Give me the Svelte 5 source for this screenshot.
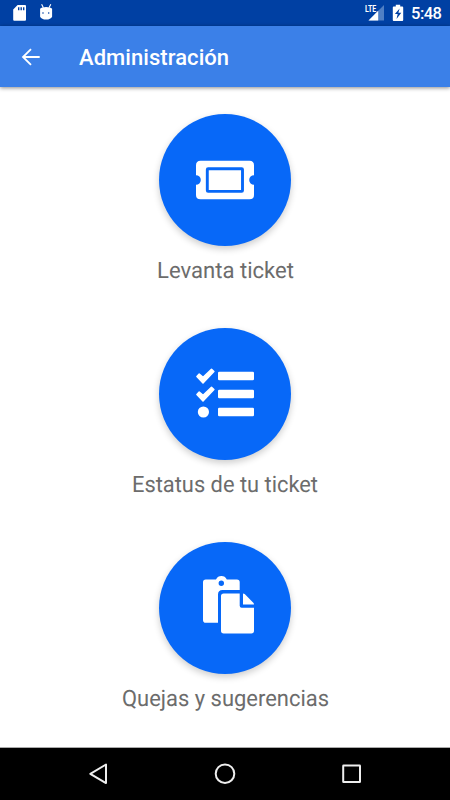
<script>
  const items = [
    { icon: 'ticket', label: 'Levanta ticket', width: 137 },
    { icon: 'tasks', label: 'Estatus de tu ticket', width: 186 },
    { icon: 'paste', label: 'Quejas y sugerencias', width: 207 }
  ];
</script>

<div class="screen">
  <div class="status">
    <svg width="90" height="26" viewBox="0 0 90 26" fill="#fff">
      <path fill-rule="evenodd" d="M17.6 5H25q1 0 1 1v13.7q0 1-1 1H14.2q-1 0-1-1V9.6ZM18 7.2v3h1.4v-3Zm2.5 0v3h1.4v-3Zm2.5 0v3h1.4v-3Z" />
      <path d="m41.6 4.2 1.8 3.6M50.8 4.2 49 7.8" stroke="#fff" stroke-width="1.1" />
      <path fill-rule="evenodd" d="M40.1 8.8q1.6-1.9 6-1.9t6 1.9v8q-1.5 2.8-6 2.8t-6-2.8ZM42.2 13a.8.8 0 1 0 1.6 0a.8.8 0 1 0-1.6 0Zm5.7 0a.8.8 0 1 0 1.6 0a.8.8 0 1 0-1.6 0Z" />
    </svg>
    <div class="right">
      <span class="lte">LTE</span>
      <svg width="46" height="26" viewBox="364 0 46 26">
        <path d="M384 5V20.5H368.5Z" fill="#507fc4" />
        <path d="M378.2 10.8V20.5H368.5Z" fill="#fff" />
        <path d="M395.8 4.8h4.4v1.8h2.1q.9 0 .9.9v12.6q0 .9-.9.9h-8.6q-.9 0-.9-.9V7.5q0-.9.9-.9h2.1Z" fill="#fff" />
        <path d="m399.6 8.5-4.7 5.6h2.8l-1.2 4.8 4.8-6.2h-2.9Z" fill="#0040a3" />
      </svg>
      <time>5:48</time>
    </div>
  </div>
  <header>
    <svg width="22" height="22" viewBox="0 0 22 22" fill="none" stroke="#fff" stroke-width="1.8">
      <path d="M19.7 11H3.2M11 3.1 3 11l8 7.9" />
    </svg>
    <h1>Administración</h1>
  </header>
  <main>
    {#each items as item}
      <section>
        <button aria-label={item.label}>
          <svg width="132" height="132" viewBox="0 0 132 132" fill="#fff">
            {#if item.icon === 'ticket'}
              <path d="M41.5 46.7H90.5Q95 46.7 95 51.2V61.2a4.8 4.8 0 0 0 0 9.6V81Q95 85.3 90.5 85.3H41.5Q37 85.3 37 81V70.8a4.8 4.8 0 0 0 0-9.6V51.2Q37 46.7 41.5 46.7Z" />
              <rect x="48.3" y="54.7" width="35.2" height="22.7" rx=".8" fill="none" stroke="#0768f8" stroke-width="2.9" />
            {:else if item.icon === 'tasks'}
              {#each [0, 18] as dy}
                <path transform="translate(0 {dy})" d="m37.9 48.6 2.3-2.5 3.9 3.3 8.4-8.2 2.4 2.4L44 54.9Z" stroke="#fff" stroke-width="1.5" stroke-linejoin="round" />
              {/each}
              <circle cx="44.4" cy="84" r="5.6" />
              <rect x="59" y="43.8" width="36" height="8.5" rx="1.3" />
              <rect x="59" y="61.8" width="36" height="8.5" rx="1.3" />
              <rect x="59" y="79.7" width="36" height="8.5" rx="1.3" />
            {:else}
              <path fill-rule="evenodd" d="M46.8 37.4H57a6 6 0 0 1 10.8 0H77.9q2.8 0 2.8 2.8v7.8H63.5Q59 48 59 52.5V80.7H46.8q-2.8 0-2.8-2.8V40.2Q44 37.4 46.8 37.4ZM59.6 41.2a2.7 2.7 0 1 0 5.4 0a2.7 2.7 0 1 0-5.4 0Z" />
              <path d="M64.7 51.4H80.7V63.7q0 2 2 2H95V88.7q0 2.7-2.7 2.7H64.7q-2.7 0-2.7-2.7V54.1q0-2.7 2.7-2.7ZM84 51.4q1 0 1.7.7l8.6 8.6q.7.7.7 1.7H84Z" />
            {/if}
          </svg>
        </button>
        <svg class="label" width={item.width} height="34" role="presentation">
          <text x="0" y="24.4" textLength={item.width} lengthAdjust="spacingAndGlyphs">{item.label}</text>
        </svg>
      </section>
    {/each}
  </main>
  <nav>
    <svg width="450" height="52" viewBox="0 748 450 52" fill="none" stroke="#eee" stroke-width="2" stroke-linejoin="round">
      <path d="M106 764.5v18.6l-15.7-9.3Z" />
      <circle cx="225" cy="773.7" r="9.3" />
      <rect x="343.2" y="765.5" width="16.8" height="16.6" rx=".4" />
    </svg>
  </nav>
</div>

<style>
  .screen {
    width: 450px;
    height: 800px;
    display: flex;
    flex-direction: column;
    overflow: hidden;
    background: #fff;
    font-family: Roboto, sans-serif;
  }
  .status {
    height: 26px;
    flex: none;
    display: flex;
    justify-content: space-between;
    background: #0040a3;
    color: #fff;
  }
  .right {
    display: flex;
    position: relative;
    width: 86px;
  }
  .lte {
    position: absolute;
    left: 1px;
    top: 4px;
    font-size: 9px;
    line-height: 10px;
    font-weight: 700;
    letter-spacing: -0.1px;
    transform: scaleX(0.78);
    transform-origin: left;
  }
  time {
    font-size: 16.5px;
    font-weight: 500;
    line-height: 28px;
    margin-left: 1px;
    letter-spacing: -0.5px;
  }
  header {
    height: 61px;
    flex: none;
    display: flex;
    align-items: center;
    padding-left: 20px;
    background: #3b80e8;
    box-shadow: 0 1px 4px rgba(0, 0, 0, 0.45);
    color: #fff;
    z-index: 1;
  }
  h1 {
    margin: 2px 0 0 37px;
    font-size: 22px;
    font-weight: 500;
    line-height: 30px;
    letter-spacing: 0.06px;
  }
  main {
    flex: 1;
    display: flex;
    flex-direction: column;
    padding-top: 27px;
    min-height: 0;
  }
  section {
    height: 214.2px;
    flex: none;
    display: flex;
    flex-direction: column;
    align-items: center;
  }
  button {
    width: 132px;
    height: 132px;
    padding: 0;
    border: 0;
    border-radius: 50%;
    background: #0768f8;
    box-shadow: 0 3px 7px rgba(0, 0, 0, 0.2);
    flex: none;
  }
  button svg {
    display: block;
  }
  .label {
    margin-top: 8px;
    overflow: visible;
    font-size: 22.6px;
    fill: #6c6c6c;
    text-rendering: geometricPrecision;
  }
  nav {
    height: 52px;
    flex: none;
    background: #000;
    z-index: 1;
    box-shadow: 0 -1px #aaa;
  }
</style>
